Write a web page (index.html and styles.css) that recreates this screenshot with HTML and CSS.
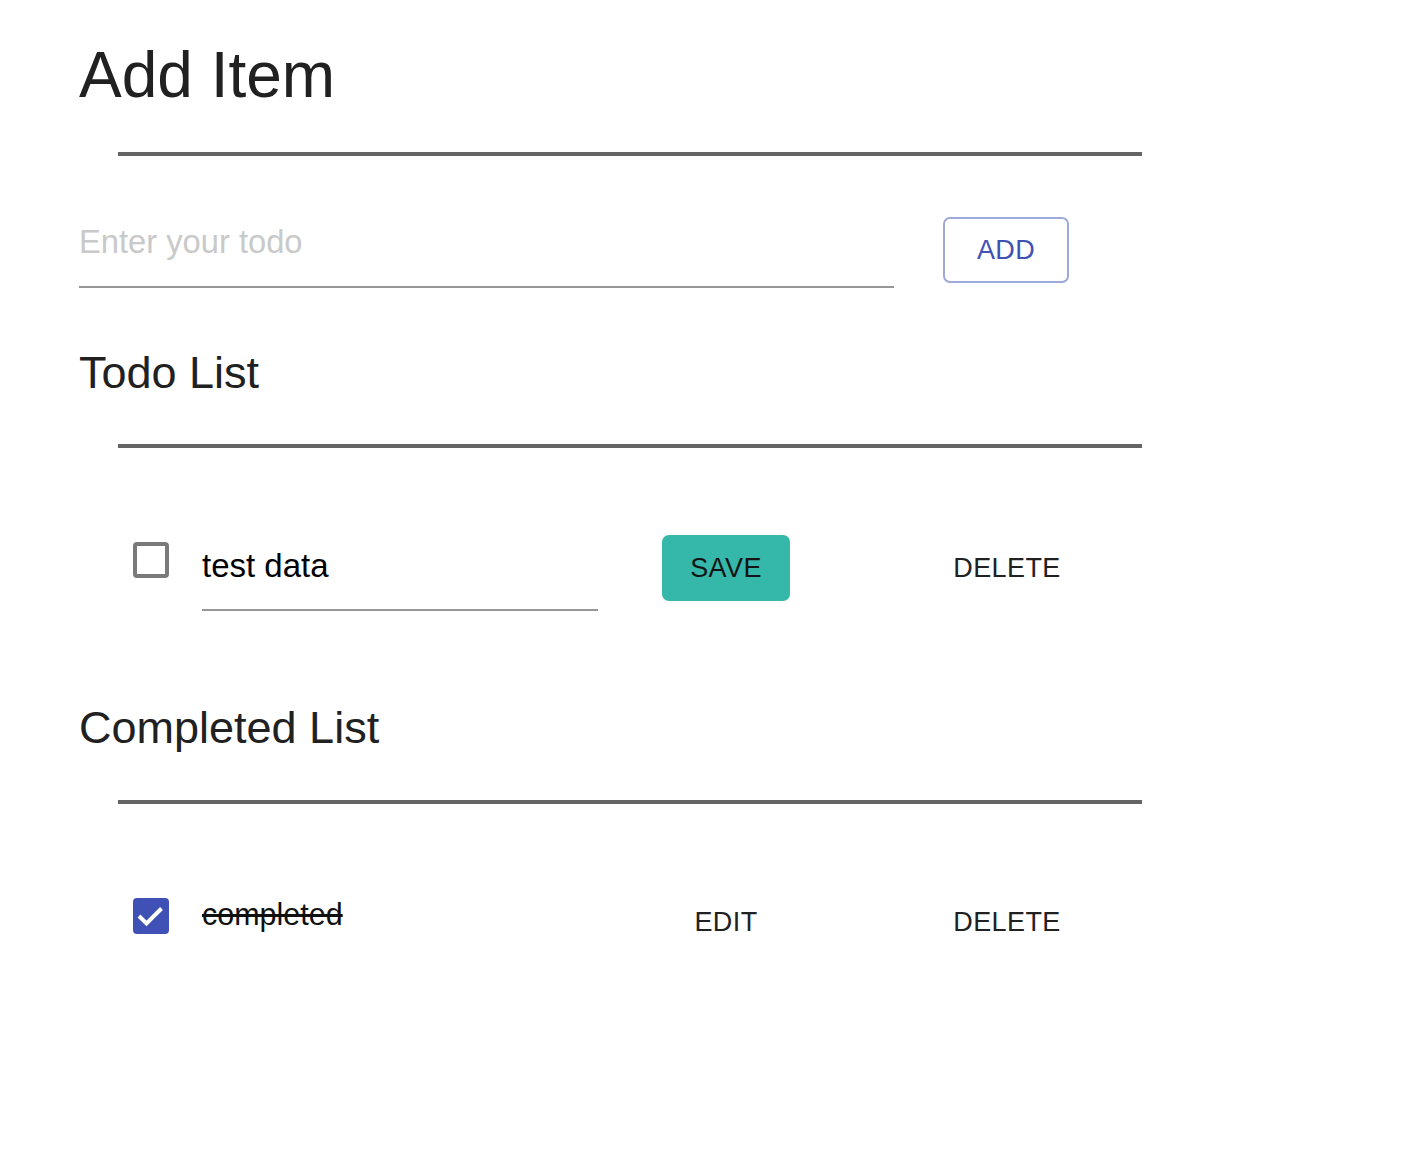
FILE: index.html
```html
<!DOCTYPE html>
<html lang="en">
<head>
<meta charset="utf-8">
<title>Todo</title>
<link rel="stylesheet" href="styles.css">
</head>
<body>
<div class="page">
  <h1 class="title">Add Item</h1>
  <hr class="rule rule-first">
  <div class="add-row">
    <div class="field field-wide">
      <input class="field-input" type="text" placeholder="Enter your todo">
    </div>
    <button class="btn btn-outlined">ADD</button>
  </div>

  <h2 class="section-title section-todo">Todo List</h2>
  <hr class="rule rule-todo">
  <div class="item-row item-todo">
    <span class="checkbox"></span>
    <div class="field field-item">
      <input class="field-input field-input-dark" type="text" value="test data">
    </div>
    <button class="btn btn-contained">SAVE</button>
    <button class="btn btn-text btn-delete">DELETE</button>
  </div>

  <h2 class="section-title section-done">Completed List</h2>
  <hr class="rule rule-done">
  <div class="item-row item-done">
    <span class="checkbox checkbox-checked">
      <svg class="check-icon" viewBox="0 0 36 36" width="36" height="36" aria-hidden="true">
        <polyline points="6,18 13.5,25.5 28.5,10.5" fill="none" stroke="#ffffff" stroke-width="4"/>
      </svg>
    </span>
    <div class="done-text-cell">
      <span class="done-text">completed</span>
    </div>
    <button class="btn btn-text btn-edit">EDIT</button>
    <button class="btn btn-text btn-delete">DELETE</button>
  </div>
</div>
</body>
</html>
```

FILE: styles.css
```css
html, body {
  margin: 0;
  padding: 0;
  background: #ffffff;
}

body {
  font-family: "Liberation Sans", Helvetica, Arial, sans-serif;
  color: rgba(0, 0, 0, 0.87);
}

.page {
  padding-left: 79px;
  width: 1102px;
}

.title {
  margin: 43px 0 0 0;
  font-size: 64px;
  line-height: 64px;
  font-weight: 400;
  color: #212121;
}

.rule {
  display: block;
  margin: 0 0 0 39px;
  width: 1024px;
  height: 4px;
  border: none;
  background: #646464;
}

.rule-first { margin-top: 45px; }
.rule-todo { margin-top: 49px; }
.rule-done { margin-top: 50px; }

.add-row {
  display: flex;
  align-items: flex-start;
  margin-top: 61px;
}

.field {
  border-bottom: 2px solid #979797;
  box-sizing: content-box;
}

.field-wide {
  width: 815px;
  margin-top: 5px;
  padding-bottom: 24px;
}

.field-item {
  width: 396px;
  margin-left: 33px;
  margin-top: 11px;
  padding-bottom: 23px;
}

.field-input {
  display: block;
  width: 100%;
  height: 40px;
  margin: 0;
  padding: 0;
  border: none;
  outline: none;
  background: transparent;
  font-family: "Liberation Sans", Helvetica, Arial, sans-serif;
  font-size: 32.7px;
  line-height: 40px;
  color: #000000;
}

.field-input::placeholder {
  color: #c9c9c9;
  opacity: 1;
}

.field-input-dark {
  font-size: 33px;
}

.btn {
  display: flex;
  align-items: center;
  justify-content: center;
  box-sizing: border-box;
  height: 66px;
  margin: 0;
  padding: 0;
  border: none;
  background: transparent;
  font-family: "Liberation Sans", Helvetica, Arial, sans-serif;
  font-size: 27px;
  letter-spacing: 0.4px;
  font-weight: 400;
  cursor: pointer;
}

.btn-outlined {
  width: 126px;
  margin-left: 49px;
  border: 2px solid #9fa8da;
  border-radius: 7px;
  color: #3f51b5;
}

.btn-contained {
  width: 128px;
  margin-left: 64px;
  background: #35b7a9;
  border-radius: 7px;
  color: #141414;
}

.btn-text {
  color: #212121;
}

.btn-edit {
  width: 128px;
  margin-left: 64px;
}

.btn-delete {
  width: 126px;
  margin-left: 154px;
}

.section-title {
  margin: 0;
  font-size: 45px;
  line-height: 45px;
  font-weight: 400;
  color: #212121;
}

.section-todo { margin-top: 62px; }
.section-done { margin-top: 94px; }

.item-row {
  display: flex;
  align-items: flex-start;
  padding-left: 54px;
}

.item-todo { margin-top: 87px; }
.item-done { margin-top: 85px; }

.checkbox {
  display: block;
  flex: none;
  box-sizing: border-box;
  width: 36px;
  height: 36px;
  border: 4px solid #7a7a7a;
  border-radius: 4px;
  margin-top: 7px;
}

.checkbox-checked {
  border: none;
  background: #3f51b5;
  margin-top: 9px;
}

.check-icon {
  display: block;
}

.done-text-cell {
  width: 396px;
  margin-left: 33px;
  margin-top: 5px;
}

.done-text {
  display: block;
  font-size: 30.5px;
  line-height: 40px;
  color: #111111;
  text-decoration: line-through;
}
```
